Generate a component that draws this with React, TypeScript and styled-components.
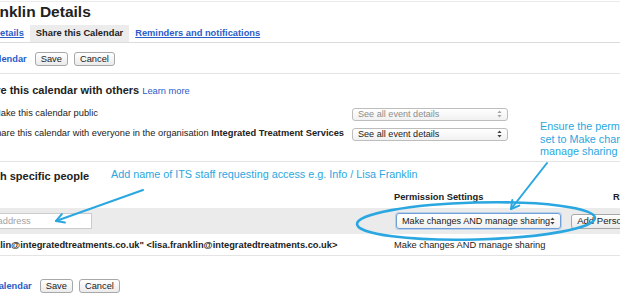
import React from 'react';
import styled, { createGlobalStyle } from 'styled-components';

const GlobalStyle = createGlobalStyle`
  html, body { margin: 0; padding: 0; background: #fff; }
  body { font-family: "Liberation Sans", Arial, Helvetica, sans-serif; color: #222; }
`;

const Page = styled.div`
  position: relative;
  width: 620px;
  height: 300px;
  overflow: hidden;
  background: #fff;
`;

const Content = styled.div`
  margin-left: -60px;
  width: 760px;
  padding-top: 1px;
`;

const Title = styled.h1`
  margin: 0;
  border-top: 1px solid #ebebeb;
  font-size: 15.5px;
  line-height: 20px;
  font-weight: bold;
  color: #222;
`;

const Tabs = styled.div`
  display: flex;
  margin-top: 3px;
  padding-left: 5px;
  border-bottom: 1px solid #dcdcdc;
`;

const Tab = styled.a<{ $active?: boolean }>`
  display: block;
  height: 17px;
  line-height: 17px;
  padding: 0 6px;
  font-size: 9.3px;
  font-weight: bold;
  color: ${(p) => (p.$active ? '#222' : '#2a5cc7')};
  text-decoration: ${(p) => (p.$active ? 'none' : 'underline')};
  background: ${(p) => (p.$active ? '#ececec' : 'transparent')};
`;

const ActionRow = styled.div<{ $indent: number; $top: number; $rule?: boolean }>`
  display: flex;
  align-items: center;
  height: 14px;
  margin-top: ${(p) => p.$top}px;
  padding: 0 0 0 ${(p) => p.$indent}px;
  ${(p) => (p.$rule ? 'padding-bottom: 7px; border-bottom: 1px solid #e4e4e4;' : '')}
`;

const BackLink = styled.a`
  font-size: 9.3px;
  font-weight: bold;
  color: #2a5cc7;
  margin-right: 8px;
  white-space: nowrap;
`;

const Button = styled.button`
  box-sizing: border-box;
  height: 14px;
  padding: 0 5px;
  margin: 0 6px 0 0;
  font-family: inherit;
  font-size: 9.3px;
  line-height: 12px;
  color: #222;
  border: 1px solid #a8a8a8;
  border-radius: 3px;
  background: linear-gradient(#ffffff, #ebebeb);
  white-space: nowrap;
`;

const SectionOne = styled.div`
  padding: 9px 0 17px 0;
  border-bottom: 1px solid #e4e4e4;
`;

const Heading = styled.div<{ $indent: number }>`
  display: flex;
  align-items: baseline;
  padding-left: ${(p) => p.$indent}px;
  font-size: 11px;
  line-height: 14px;
  font-weight: bold;
  color: #222;
  white-space: nowrap;
`;

const SmallLink = styled.a`
  margin-left: 3px;
  font-size: 9.3px;
  font-weight: normal;
  color: #2a5cc7;
`;

const Options = styled.div`
  margin-top: 6px;
`;

const OptionRow = styled.div`
  display: grid;
  grid-template-columns: 368px 156px;
  column-gap: 8px;
  align-items: center;
  height: 20px;
  padding-left: 36px;
`;

const OptionLabel = styled.label`
  display: flex;
  align-items: center;
  gap: 5px;
  padding-bottom: 3px;
  font-size: 9.3px;
  color: #222;
  white-space: nowrap;
`;

const Check = styled.span`
  display: inline-block;
  box-sizing: border-box;
  width: 12px;
  height: 12px;
  border: 1px solid #999;
  border-radius: 2px;
  background: #fff;
`;

const SelectBox = styled.div<{ $w: number; $h: number; $muted?: boolean; $focus?: boolean }>`
  display: flex;
  align-items: center;
  justify-content: space-between;
  box-sizing: border-box;
  width: ${(p) => p.$w}px;
  height: ${(p) => p.$h}px;
  padding: 0 5px 0 5px;
  border: 1px solid ${(p) => (p.$focus ? '#6f9fd6' : '#bdbdbd')};
  border-radius: 3px;
  background: linear-gradient(#ffffff, #f1f1f1);
  box-shadow: ${(p) => (p.$focus ? '0 0 0 1px #b7d0ee' : 'none')};
  font-size: 9.1px;
  color: ${(p) => (p.$muted ? '#8c8c8c' : '#222')};
  white-space: nowrap;
`;

const SectionTwo = styled.div`
  padding-top: 7px;
`;

const TableRow = styled.div<{ $band?: boolean; $rule?: boolean; $top?: number }>`
  display: grid;
  grid-template-columns: 444px 219px 90px;
  align-items: center;
  padding-left: 10px;
  margin-top: ${(p) => p.$top ?? 0}px;
  height: ${(p) => (p.$band ? 26 : p.$rule ? 21 : 14)}px;
  background: ${(p) => (p.$band ? '#ebebeb' : 'transparent')};
  border-bottom: ${(p) => (p.$rule ? '1px solid #e4e4e4' : 'none')};
  font-size: 9.3px;
  color: #222;
  white-space: nowrap;
`;

const HeadCell = styled.div<{ $pad?: number }>`
  font-weight: bold;
  padding-left: ${(p) => p.$pad ?? 0}px;
`;

const Cell = styled.div<{ $pad?: number; $bold?: boolean }>`
  display: flex;
  align-items: center;
  padding-left: ${(p) => p.$pad ?? 0}px;
  font-weight: ${(p) => (p.$bold ? 'bold' : 'normal')};
`;

const EmailInput = styled.input`
  box-sizing: border-box;
  width: 148px;
  height: 16px;
  margin-left: -6px;
  padding: 0 3px;
  border: 1px solid #cbcbcb;
  background: #fff;
  font-family: inherit;
  font-size: 9.3px;
  color: #222;
  outline: none;
  &::placeholder { color: #a3a3a3; }
`;

const AddButton = styled(Button)`
  height: 15px;
  margin-left: 10px;
  font-size: 9.6px;
`;

const Overlay = styled.div`
  position: absolute;
  inset: 0;
  pointer-events: none;
`;

const Drawing = styled.svg`
  position: absolute;
  left: 0;
  top: 0;
`;

const Note = styled.div<{ $x: number; $y: number }>`
  position: absolute;
  left: ${(p) => p.$x}px;
  top: ${(p) => p.$y}px;
  font-family: "Liberation Sans", Helvetica, Arial, sans-serif;
  font-size: 10.8px;
  line-height: 12.7px;
  color: #2aa7e0;
  white-space: pre;
`;

const UpDown = ({ muted }: { muted?: boolean }) => (
  <svg width="5" height="8" viewBox="0 0 5 8">
    <path d="M2.5 0.5 L4.6 3 H0.4Z M2.5 7.5 L0.4 5 H4.6Z" fill={muted ? '#a8a8a8' : '#444'} />
  </svg>
);

export default function App() {
  const blue = '#2aa7e0';
  return (
    <Page>
      <GlobalStyle />
      <Content>
        <Title>Lisa Franklin Details</Title>
        <Tabs>
          <Tab>Calendar Details</Tab>
          <Tab $active>Share this Calendar</Tab>
          <Tab>Reminders and notifications</Tab>
        </Tabs>
        <ActionRow $indent={3} $top={9} $rule>
          <BackLink>« Back to Calendar</BackLink>
          <Button>Save</Button>
          <Button>Cancel</Button>
        </ActionRow>

        <SectionOne>
          <Heading $indent={36}>
            Share this calendar with others
            <SmallLink>Learn more</SmallLink>
          </Heading>
          <Options>
            <OptionRow>
              <OptionLabel>
                <Check />
                Make this calendar public
              </OptionLabel>
              <SelectBox $w={156} $h={13} $muted>
                See all event details
                <UpDown muted />
              </SelectBox>
            </OptionRow>
            <OptionRow>
              <OptionLabel>
                <Check />
                <span>
                  Share this calendar with everyone in the organisation{' '}
                  <b>Integrated Treatment Services</b>
                </span>
              </OptionLabel>
              <SelectBox $w={156} $h={13}>
                See all event details
                <UpDown />
              </SelectBox>
            </OptionRow>
          </Options>
        </SectionOne>

        <SectionTwo>
          <Heading $indent={11}>Share with specific people</Heading>
          <TableRow $top={7}>
            <HeadCell $pad={5}>Person</HeadCell>
            <HeadCell>Permission Settings</HeadCell>
            <HeadCell>Remove</HeadCell>
          </TableRow>
          <TableRow $band $top={4}>
            <Cell>
              <EmailInput placeholder="Enter email address" />
            </Cell>
            <Cell $pad={2}>
              <SelectBox $w={171} $h={16} $focus>
                Make changes AND manage sharing
                <UpDown />
              </SelectBox>
              <AddButton>Add Person</AddButton>
            </Cell>
            <Cell />
          </TableRow>
          <TableRow $rule>
            <Cell $pad={5} $bold>
              "lisa.franklin@integratedtreatments.co.uk" &lt;lisa.franklin@integratedtreatments.co.uk&gt;
            </Cell>
            <Cell>Make changes AND manage sharing</Cell>
            <Cell />
          </TableRow>
        </SectionTwo>

        <ActionRow $indent={8} $top={23}>
          <BackLink>« Back to Calendar</BackLink>
          <Button>Save</Button>
          <Button>Cancel</Button>
        </ActionRow>
      </Content>

      <Overlay>
        <Drawing width="620" height="300" viewBox="0 0 620 300">
          <g fill="none" stroke={blue} strokeLinecap="round" strokeLinejoin="round">
            <ellipse cx="476" cy="221" rx="119" ry="18.5" strokeWidth="2.6" transform="rotate(-1.5 476 221)" />
            <path d="M547 163 L511 209" strokeWidth="2" />
            <path d="M519.3 205.6 L511 209 L512.3 200.1" strokeWidth="2" />
            <path d="M143 190 L56 221" strokeWidth="2" />
            <path d="M64.9 222.6 L56 221 L61.8 214.1" strokeWidth="2" />
          </g>
        </Drawing>
        <Note $x={111} $y={168}>Add name of ITS staff requesting access e.g. Info / Lisa Franklin</Note>
        <Note $x={540} $y={120}>{'Ensure the permission is\nset to Make changes AND\nmanage sharing'}</Note>
      </Overlay>
    </Page>
  );
}
